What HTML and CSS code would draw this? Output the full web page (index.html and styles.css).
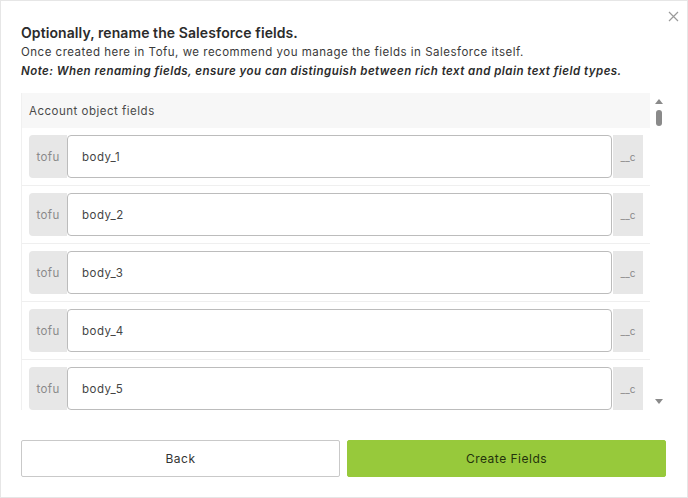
FILE: index.html
```html
<!DOCTYPE html>
<html lang="en">
<head>
<meta charset="utf-8">
<title>Rename Salesforce fields</title>
<link rel="stylesheet" href="styles.css">
</head>
<body>
<div class="modal">
  <div class="top">
    <button class="close" aria-label="Close">
      <svg width="11" height="11" viewBox="0 0 11 11"><path d="M1 1L10 10M10 1L1 10" stroke="#9a9a9a" stroke-width="1.2" fill="none"/></svg>
    </button>
  </div>
  <h1 class="title">Optionally, rename the Salesforce fields.</h1>
  <p class="desc">Once created here in Tofu, we recommend you manage the fields in Salesforce itself.</p>
  <p class="note">Note: When renaming fields, ensure you can distinguish between rich text and plain text field types.</p>
  <div class="scroll-area">
    <div class="card">
      <div class="card-head">Account object fields</div>
      <div class="row"><span class="pre">tofu</span><input class="field" value="body_1"><span class="suf">__c</span></div>
      <div class="row"><span class="pre">tofu</span><input class="field" value="body_2"><span class="suf">__c</span></div>
      <div class="row"><span class="pre">tofu</span><input class="field" value="body_3"><span class="suf">__c</span></div>
      <div class="row"><span class="pre">tofu</span><input class="field" value="body_4"><span class="suf">__c</span></div>
      <div class="row"><span class="pre">tofu</span><input class="field" value="body_5"><span class="suf">__c</span></div>
    </div>
    <div class="scrollbar" aria-hidden="true">
      <span class="sb-arrow up"></span>
      <div class="sb-track"><span class="sb-thumb"></span></div>
      <span class="sb-arrow down"></span>
    </div>
  </div>
  <div class="actions">
    <button class="btn back">Back</button>
    <button class="btn primary">Create Fields</button>
  </div>
</div>
</body>
</html>
```

FILE: styles.css
```css
* { box-sizing: border-box; }
html, body { margin: 0; padding: 0; background: #fff; }
body { font-family: Inter, "Liberation Sans", sans-serif; color: #333; }

.modal {
  width: 688px;
  height: 498px;
  border: 1px solid #e6e6e6;
  padding: 9px 21px 0 20px;
  display: flex;
  flex-direction: column;
}

.top { display: flex; justify-content: flex-end; height: 13px; }
.close {
  margin-right: -14px;
  width: 13px; height: 13px;
  padding: 1px; border: 0; background: transparent;
  display: flex; align-items: center; justify-content: center;
}

.title {
  margin: 1px 0 0;
  font-size: 14px;
  line-height: 18px;
  font-weight: 600;
  letter-spacing: 0.08px;
  color: #2b2b2b;
}
.desc, .note {
  margin: 0;
  font-size: 11.5px;
  letter-spacing: 0.5px;
  line-height: 19px;
  color: #3a3a3a;
}
.desc { padding-top: 1px; }
.note { font-style: italic; font-weight: 600; color: #2b2b2b; line-height: 18px; letter-spacing: 0.46px; }

.scroll-area {
  margin-top: 13px;
  height: 317px;
  flex: none;
  display: flex;
}

.card {
  flex: 1;
  min-width: 0;
  overflow: hidden;
  border-left: 1px solid #f0f0f0;
  background: #fff;
}
.card-head {
  height: 35px;
  line-height: 36px;
  padding-left: 7px;
  font-size: 11.5px;
  letter-spacing: 0.5px;
  color: #4a4a4a;
  background: #f7f7f7;
}
.row {
  display: flex;
  padding: 7px;
  border-bottom: 1px solid #efefef;
}
.pre {
  width: 38px;
  height: 43px;
  flex: none;
  background: #e7e7e7;
  border-radius: 4px 0 0 4px;
  color: #8a8a8a;
  font-size: 11.5px;
  letter-spacing: 0.4px;
  display: flex; align-items: center; justify-content: center;
}
.field {
  flex: 1;
  min-width: 0;
  height: 43px;
  border: 1px solid #bcbcbc;
  border-radius: 4px;
  padding: 0 14px;
  font-family: inherit;
  font-size: 11.5px;
  letter-spacing: 0.5px;
  color: #444;
  background: #fff;
  outline: none;
}
.suf {
  width: 30px;
  height: 43px;
  flex: none;
  margin-left: 1px;
  background: #e7e7e7;
  color: #8a8a8a;
  font-size: 10px;
  display: flex; align-items: center; justify-content: center;
}

.scrollbar {
  width: 16px;
  flex: none;
  display: flex;
  flex-direction: column;
  background: #fff;
}
.sb-arrow {
  height: 17px;
  display: flex;
  align-items: center;
  padding-left: 5px;
}
.sb-arrow::before {
  content: "";
  border-left: 4px solid transparent;
  border-right: 4px solid transparent;
}
.sb-arrow.up::before { border-bottom: 5px solid #8a8a8a; }
.sb-arrow.down::before { border-top: 5px solid #8a8a8a; }
.sb-track { flex: 1; padding-left: 6px; }
.sb-thumb {
  display: block;
  width: 6px;
  height: 16px;
  border-radius: 3px;
  background: #8a8a8a;
}

.actions {
  margin-top: 30px;
  display: flex;
  gap: 7px;
}
.btn {
  flex: 1;
  height: 37px;
  border-radius: 2px;
  font-family: Inter, "Liberation Sans", sans-serif;
  font-size: 12px;
  letter-spacing: 0.5px;
  color: #333;
}
.back { background: #fff; border: 1px solid #c9c9c9; }
.primary { background: #97c93b; border: 1px solid #97c93b; color: #24330c; }
```
